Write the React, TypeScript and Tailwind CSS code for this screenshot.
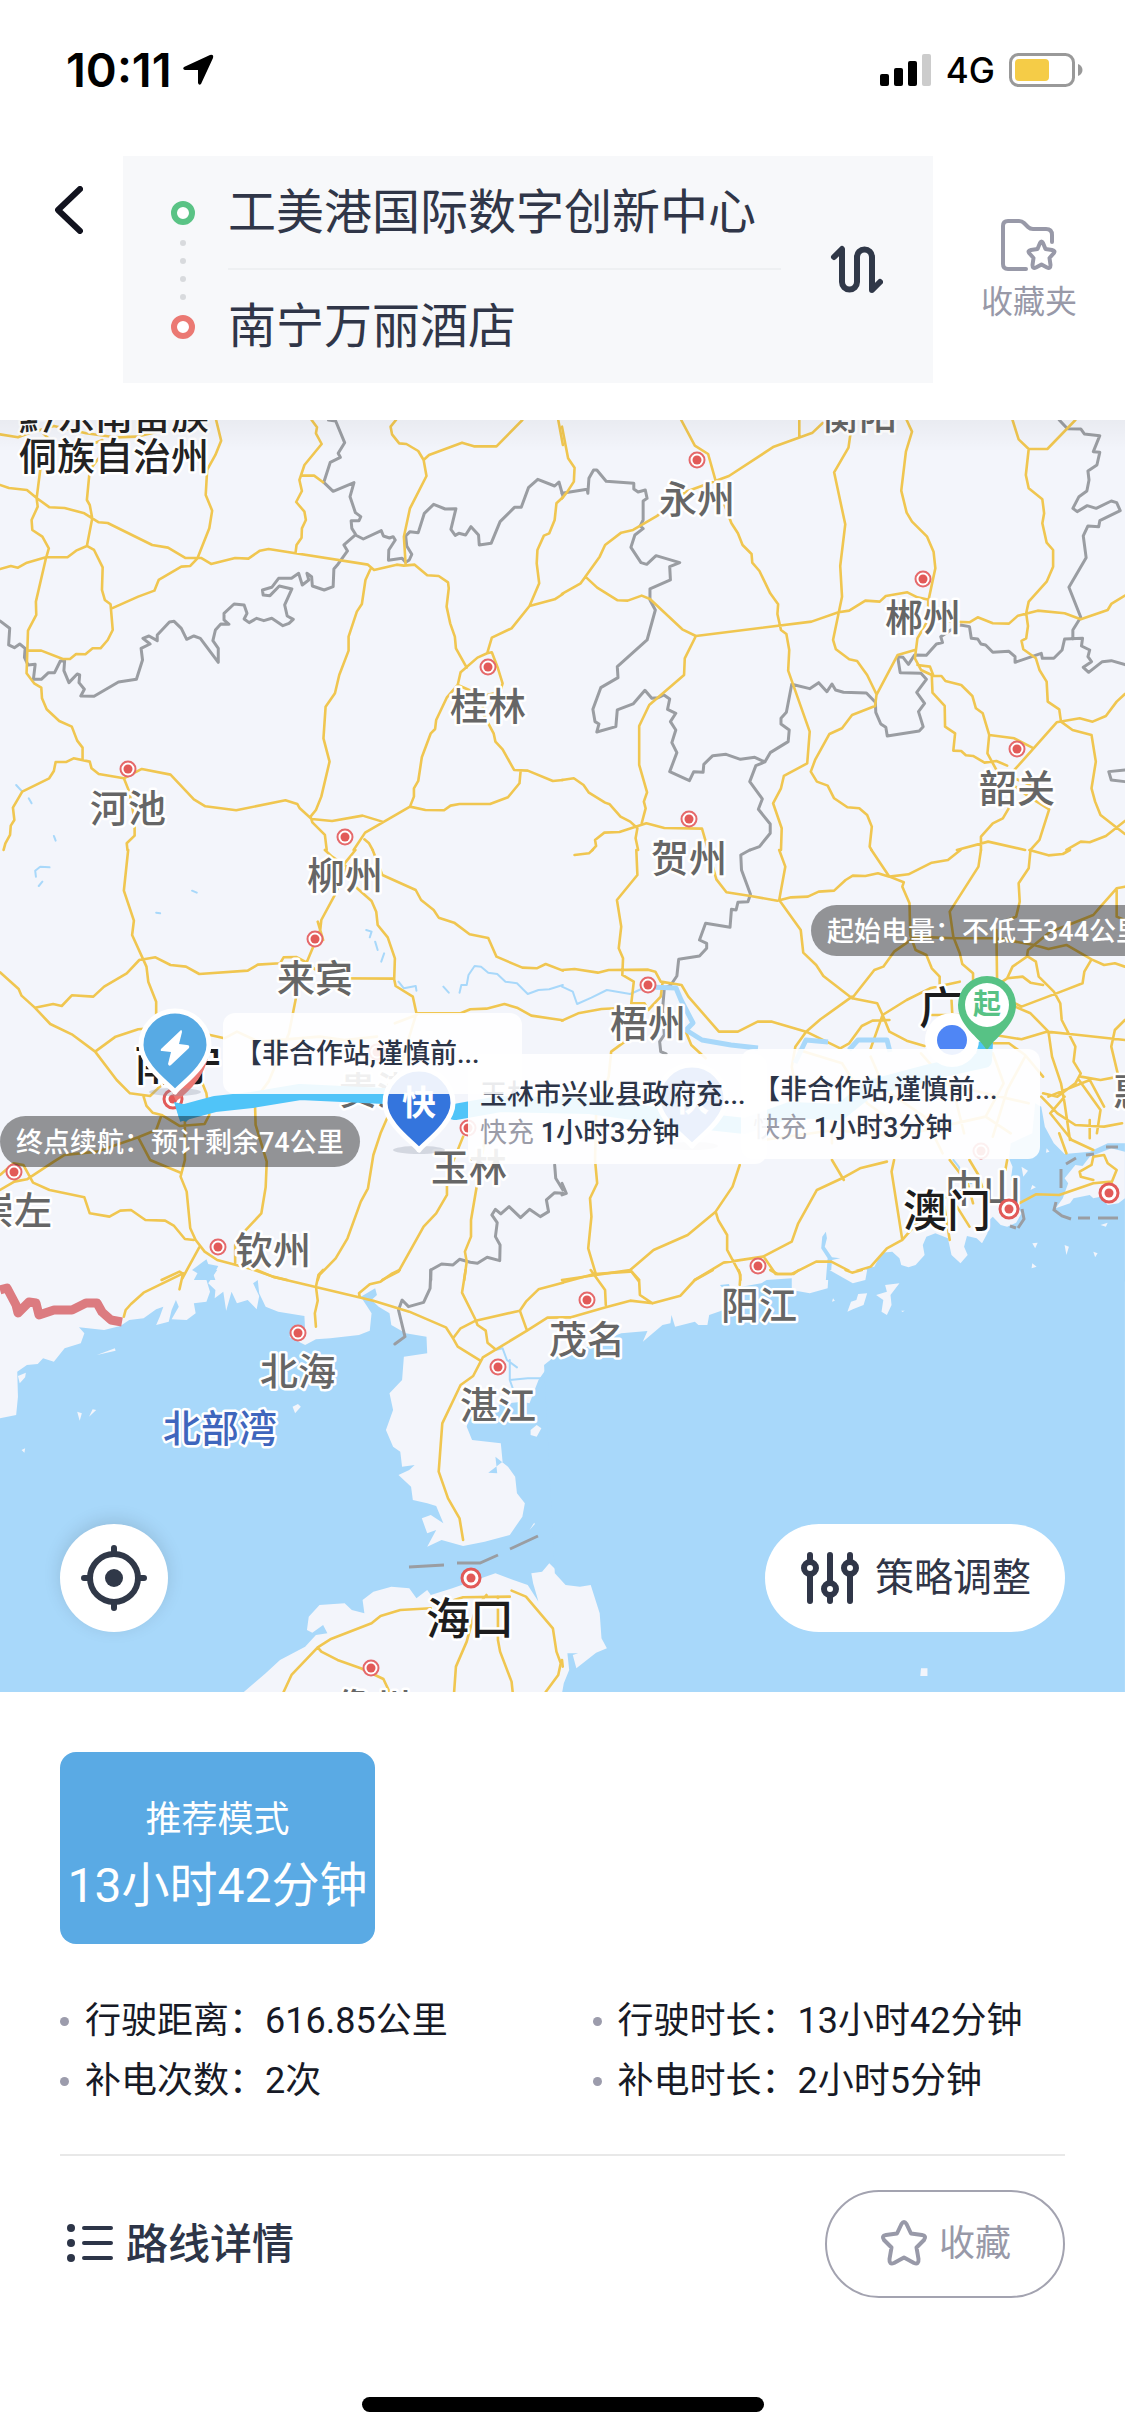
import { useState } from "react";
import { clsx } from "clsx";

type Tile = { x: number; y: number; land?: string; sea?: string; rivers?: string; borders?: string; roads: string };

// Map geometry, one entry per tile. Paths are in tile units (1568 x 1290).
const TILES: Tile[] = [
  {
    x: 0,
    y: 0,
    rivers: "M45 1095L62 1115M80 1135L88 1150M150 1248L155 1262",
    borders:
      "M0 603L27 625 24 675 40 683 55 672 70 685 68 712 78 735 98 733 93 778 115 778 135 758 152 758 168 723 180 722 178 752 192 788 215 762 222 765 220 788 235 808 225 828 262 829 330 786 380 778 397 720 393 685 418 672 398 655 415 648 438 662 438 645 472 606 485 604 505 625 520 658 540 648 558 655 608 727 608 685 593 662 600 630 615 612 638 613 624 600 624 580 652 552 680 555 688 580 680 597 694 608 715 595 735 602 757 595 788 617 805 610 817 598 800 588 793 555 813 507 778 498 752 527 733 525 731 510 757 502 776 475 812 475 832 460 842 495 860 480 855 460 868 470 870 498 903 510 928 500 930 447 942 432 968 393 958 375 990 345 1012 357 1062 332 1068 348 1085 354 1095 350 1101 360 1083 390 1082 421 1120 415 1130 427 1140 420 1147 403 1133 378 1130 348 1142 335 1165 338 1182 280 1208 253 1240 267 1270 266 1256 328 1268 346 1278 340 1297 345 1312 320 1333 345 1335 375 1368 370 1393 305 1433 262 1452 262 1472 203 1498 178 1545 198 1557 186 1568 228M915 0L935 3 960 68 942 100 948 112 920 127 902 187 928 214 986 188 975 230 990 278 1005 290 1000 302 978 302 980 325 990 342",
    roads:
      "M0 43L50 52 80 40 150 18 240 40 320 52 380 50 460 30M120 40L140 60 112 150 102 235 105 260 88 300 90 330 118 350 136 385 128 415 100 545 101 585 78 632 74 760 95 790 115 803 117 835 130 868 165 903 200 920 215 962 230 983 230 1020M0 195L25 204 75 210 102 234 138 262 180 264 235 280 275 307 300 309 424 375 468 383 516 414 560 414 588 432 655 414 692 416 724 392 748 387 1025 434 1042 450 1105 434 1125 437 1155 434 1190 466 1222 468 1248 487 1250 505 1244 560 1254 610 1267 650 1270 685 1300 743M240 80L285 60 278 110 250 150 242 240 250 255 257 295 242 378 212 392 188 412 130 411 75 428 50 443 30 438 0 447M602 0L616 62 600 105 577 150 573 225 591 272 583 325 550 415 530 438 505 440 442 480 430 512 385 530 310 566M242 378L262 390 286 442 284 510 292 540 308 553 314 630 300 660 280 685 258 685 238 703 212 702 195 717 175 717 115 692 78 692M868 0L883 22 880 40 896 72 848 135 834 180 841 213 825 246 848 275 852 300 841 325 840 353 826 375 823 400M838 167L875 167 900 187M1103 0L1088 20 1092 43 1112 70 1132 72 1165 93 1180 120 1188 168 1142 265 1125 350 1130 435M1180 120L1195 105 1287 68 1320 79 1383 79 1455 0M1555 0L1568 75M1568 232L1550 250 1545 300 1530 340 1515 347 1497 390 1495 430 1502 490 1475 558 1425 625 1370 653 1357 700 1330 713 1283 757 1275 795 1245 832 1215 900 1212 927 1200 940 1175 1012 1165 1083 1153 1105 1153 1130 1142 1160 1017 1238 985 1290M1568 522L1545 538 1475 558M1357 700L1370 697 1387 745 1400 790 1393 815 1345 828 1275 795M1345 828L1345 880 1375 940 1380 965 1400 988 1432 1050 1470 1052 1540 1083 1568 1080M1450 1055L1447 1090 1415 1132 1365 1152 1280 1152 1255 1157 1237 1171 1185 1170 1142 1160M1032 447L1018 480 1008 552 994 575 971 650 971 692 945 765 933 820 907 860 901 955 918 1025 895 1130 880 1170 865 1190 870 1207 905 1245 910 1290M1065 1205L1010 1187 925 1203 868 1197 835 1165 828 1152 795 1141 658 1171 572 1159 540 1138 475 1064 395 1047 345 1075 275 1062 255 1045 250 1025 205 1015 185 1026 155 1026 150 1053 137 1075 62 1115 36 1163 40 1200 30 1217 28 1245 15 1270 10 1290M345 1075L360 1115 375 1200 375 1247 353 1270 355 1290M1015 1258L1028 1270 1038 1290",
  },
  {
    x: 562,
    y: 0,
    borders:
      "M0 220L70 208 72 220 75 175 88 150 97 150 123 184 200 190 200 207 212 216 232 210 237 235 226 243 226 300 218 318 226 326 203 345 192 382 220 428 236 433 262 407 328 428 300 440 302 480 245 507 245 540 260 570 237 660 154 740 156 773 108 803 86 868 92 905 103 912 97 936 150 920 154 870 198 852 231 811 250 835 268 833 284 825 300 837 294 868 317 880 302 905 317 930 306 968 320 998 300 1055 355 1082 367 1055 393 1057 395 1033 420 1007 457 1003 497 1018 537 1012 565 1026 580 998 630 965 633 930 610 912 610 895 625 877 640 793 690 806 715 788 738 815 752 792 762 810 784 817 848 819 873 847 874 877 888 912 902 922 906 948 995 933 1006 920 993 875 1010 850 988 817 1015 778 1000 760 942 758 935 710 950 712 965 733 982 705 1015 706 1043 672 1060 668 1055 650 1080 632 1110 615 1135 620 1140 655 1158 657 1167 672 1180 675 1200 697 1245 694 1262 710 1262 727 1335 700 1338 715 1370 715 1393 690 1400 657 1450 655 1447 678 1470 690 1465 710 1475 725 1452 742 1467 757 1505 725 1530 722 1568 734M1385 0L1408 26 1445 27 1455 42 1498 47 1480 95 1498 97 1490 135 1465 153 1468 180 1462 213 1440 230 1423 265 1435 275 1463 257 1488 265 1530 243 1545 248 1555 272 1498 302 1495 320 1465 318 1452 348 1460 413 1412 502 1445 592 1423 630 1423 657M565 1026L540 1037 523 1085 558 1137 547 1168 580 1212 580 1240 550 1280 525 1290M1568 1050L1523 1055 1530 1080 1568 1085",
    roads:
      "M0 20L17 115 35 143 33 185 15 215 0 235M0 522L52 490 65 470 105 410 120 375 165 338 198 330 265 288 290 262 345 215 465 168 590 80 698 38 735 0M332 0L370 77 407 102 430 190 472 310 490 340 503 375 528 402 530 428 550 453 580 520 602 553 600 582 610 630 625 642 633 690 630 752 690 935 683 1030 618 1068 610 1105 588 1150 612 1225 610 1290M661 0L661 50M803 0L803 45 798 83 758 157 789 313 775 438 780 530 755 660 763 688 800 718 822 723 850 765 876 823M960 0L975 35 958 95 945 212 960 278 975 305 1017 350 1035 395 1040 445 1020 545 1020 600 990 655 983 715 1000 750 1030 765 1032 818 1066 858 1067 920 1095 940 1090 992 1112 993 1125 1006 1145 1008 1177 1028 1210 1023 1240 1037M65 470L98 503 155 541 183 542 222 527 245 537 335 628 373 648 695 605 770 577 800 572 845 542 885 545 902 528 962 517 990 532 1025 540M373 648L342 715 340 765 243 855 215 918 215 1035 237 1117 228 1145 233 1165 222 1210M983 690L935 705 876 825 872 858 808 885 780 925 745 942 705 1020 693 1055 710 1085 740 1097 758 1135 795 1162 828 1165 850 1185 863 1220 857 1280 862 1290M990 735L1025 740 1035 768 1057 768 1068 783 1112 795 1143 828 1153 865 1172 880 1190 945 1185 1000 1210 1050M1190 945L1260 955 1310 983M1255 0L1272 58 1300 87 1352 87 1430 0M1300 87L1292 165 1300 205 1338 238 1343 280 1338 310 1350 368 1368 390 1368 440 1350 485 1300 545 1293 580 1298 618 1293 655 1280 663 1285 688 1320 715 1330 750 1350 785 1353 845 1385 868 1390 905 1422 930 1475 945 1487 1025 1475 1105 1485 1145 1500 1185 1568 1242M1080 605L1135 607 1158 592 1200 610 1245 611 1270 587 1325 572 1400 580 1445 598 1520 570 1530 552 1568 527M1568 822L1545 845 1515 888 1478 905 1442 895 1378 907 1310 990 1260 1050 1250 1090 1300 1130 1357 1168 1330 1260 1305 1290M1260 1075L1305 1095M1250 1155L1228 1195 1200 1210 1167 1250 1167 1290M1100 1290L1187 1265 1290 1290M1405 1290L1445 1265 1470 1267 1515 1248 1568 1203M0 1080L33 1075 60 1095 75 1118 120 1148 133 1153 163 1190 190 1205 210 1225 205 1255 212 1290M85 1290L95 1278 92 1260 118 1238 160 1236 235 1210 285 1224 390 1226 407 1290",
  },
  {
    x: 0,
    y: 430,
    sea: "M540 1290L550 1270 535 1260 560 1240 575 1228 580 1242 608 1248 595 1275 600 1290Z",
    rivers:
      "M100 80L98 62 112 50 138 52M118 95L108 108M535 122L548 128M435 188L446 190M1020 240L1035 245 1030 262M1045 275L1052 300M1070 310L1062 335M1110 395L1125 415 1158 408 1160 422M1235 410L1250 428M1280 428L1285 405 1300 405 1305 375 1322 348 1340 350 1360 368 1385 372 1408 395 1440 400 1470 432 1500 420 1530 418 1568 405",
    borders:
      "M1545 945L1548 985 1568 1020M1568 1030L1545 1028 1522 1050 1528 1085 1505 1100 1475 1078 1450 1103 1418 1070 1395 1092 1380 1078 1370 1095 1385 1118 1380 1160 1393 1185 1392 1232 1357 1222 1330 1240 1310 1237 1280 1228 1262 1245 1230 1242 1200 1260 1200 1290",
    roads:
      "M357 0L345 122 373 212 368 255 408 350 413 395 435 455 435 500M388 330L433 322 475 345 518 350 555 372 690 362 718 344 780 340 790 322 825 321 855 338 880 360 910 368M388 330L353 370 290 410 260 440 200 436 172 468 148 462 97 473M0 367L52 417 60 437 97 473 140 522 200 553 265 605 325 690 362 730 418 738 440 715 470 690M265 605L322 560 385 538 480 530 585 555 625 565 660 545 720 575 890 560 960 570 1050 560M905 0L925 20 965 50 935 130 895 210 892 240 855 335 825 440 805 550 748 695 710 750 712 825 743 935 740 1012 728 1090 685 1140 655 1185 655 1240M885 215L900 270M990 0L960 40M1038 0L1065 75 1158 120 1173 150 1208 180 1222 203 1265 218 1308 253 1360 264 1383 320 1455 353 1495 355 1520 342 1568 362M965 50L990 110 1035 153 1048 185 1052 225 1080 262 1100 325 1098 388 1102 408 1150 440 1160 490 1140 560 1120 640M910 385L1098 386M1160 490L1283 490 1310 478 1355 476 1405 462 1440 473 1480 497 1568 511M1100 520L1160 495M400 740L408 768 425 788 450 795 500 828 570 822 583 795 575 730 560 690M450 795L435 840 385 862 270 905 180 915 150 935 75 988 40 995 0 1020M0 975L38 940 65 945 92 998 138 1020 235 1042 250 1090 305 1100 335 1082 365 1080 405 1110 460 1112 485 1128 515 1167 540 1170M385 862L418 930 500 967M515 800L515 930 503 980 520 1025 530 1135 545 1170 570 1205 605 1230 700 1257 760 1280 800 1290M555 1192L508 1285M450 1290L500 1265 510 1272M1080 800L1060 850 1040 915 1025 1015 1005 1055 968 1165 935 1225 890 1275 885 1290M1290 860L1245 980 1245 1035 1215 1090 1180 1130 1110 1265 1065 1290M1350 870L1312 1110 1312 1160 1295 1205 1300 1235 1293 1290",
  },
  {
    x: 562,
    y: 430,
    sea: "M850 1295L848 1255 870 1250 880 1230 890 1208 920 1205 940 1225 945 1245 965 1252 985 1245 1010 1215 1005 1185 1015 1160 1040 1150 1075 1165 1085 1215 1110 1240 1130 1215 1120 1190 1128 1158 1155 1165 1170 1180 1185 1150 1190 1110 1200 1100 1222 1125 1240 1130 1265 1118 1280 1090 1262 1060 1270 1010 1250 990 1255 950 1245 925 1250 880 1310 850 1318 760 1335 770 1345 830 1370 880 1400 912 1470 905 1520 880 1568 880 1568 1295ZM735 1290L740 1225 722 1195 725 1160 735 1145 738 1165 732 1190 752 1222 775 1225 752 1230 748 1290Z",
    land: "M1375 1075L1395 1045 1410 1000 1400 985 1430 945 1450 948 1470 920 1530 895 1568 905 1568 1045 1550 1060 1520 1065 1500 1040 1480 1045 1470 1035 1425 1045 1415 1060ZM1280 950L1298 962 1285 980ZM1310 1005L1320 1012 1305 1020ZM1350 895L1358 905 1348 908ZM1310 1180L1325 1178 1318 1195ZM1400 1185L1412 1190 1405 1215ZM1480 1205L1492 1210 1485 1222ZM1310 1240L1322 1250 1308 1255ZM1240 1270L1252 1275 1245 1285ZM1500 1125L1520 1118 1515 1130Z",
    rivers:
      "M0 410L30 425 42 462 82 443 125 420 190 432 240 408M1090 930L1105 950 1118 985 1140 1000",
    borders:
      "M523 0L498 15 500 60 525 133 518 155 490 157 485 180 472 178 468 232 400 220 383 270 403 280 403 295 383 318 325 328 320 378 303 405 285 415 280 480 285 555 272 575 275 605 290 612M0 1000L12 1030 0 1035",
    roads:
      "M35 15L75 10 85 0M207 0L210 75 153 150 165 230 158 295 170 325 168 375 200 395 193 460 230 460 240 480 275 440 280 398M0 360L35 357 100 368 130 360 240 359 260 365 275 395 333 405 352 440 437 545 490 545 545 515 585 515 680 545 720 508 808 440M0 512L45 490 110 477 150 475M175 575L137 605 130 680 95 790 92 930 98 1000 78 1045 82 1100 73 1195 95 1275M345 545L360 585 400 625M407 0L430 88 458 127 525 138 600 152 638 142 685 140 715 125 758 122 790 90 810 77 845 78 880 70 912 80 965 73 1030 38 1075 30 1110 0M605 0L622 50 605 150 665 240 672 308 708 345 728 378 808 445 878 460 893 495 912 545 960 572 1010 588M862 0L912 80 952 97 948 110 968 160 970 255 985 300 1015 315 1030 355 1052 380 1052 410M1167 0L1160 50 1080 185 1090 260 1108 310 1115 342 1145 370 1145 430M1305 0L1300 55 1272 100 1275 155 1265 200 1240 210M1302 0L1355 16 1395 12 1415 0M1568 110L1545 115 1500 170 1480 195 1410 225 1360 245 1315 285 1298 300 1295 320 1255 350 1240 385 1185 425M1545 115L1545 200 1568 210M808 445L870 360 895 350 925 305 985 260 1090 265M1210 240L1212 400M1090 265L1210 265 1315 285 1355 297 1405 285 1475 328 1510 345 1540 340 1568 350M1298 320L1320 335 1328 380 1370 425 1388 460 1392 510 1430 590 1425 635 1445 670 1430 700 1380 740 1340 730M1240 385L1283 380 1305 398 1340 405M1475 328L1455 365 1450 400 1390 425 1280 470 1262 460M1262 470L1305 490 1355 545 1365 620 1390 700 1400 760 1415 870M1108 395L1025 415 960 450 893 495 860 595M912 510L865 512 835 528 800 580 775 595 680 545 650 590 640 650M1030 495L1110 495M1085 450L1090 550M1205 555L1280 568 1350 545 1440 555 1568 570M1190 540L1190 580 1245 580 1290 615 1340 680M1568 510L1540 540 1530 590 1550 680 1500 690 1445 680M1335 740L1380 790 1430 825 1510 830 1560 820M1355 740L1470 690 1510 770M1440 690L1500 780 1490 850M1400 740L1360 790 1420 870 1480 900M1470 810L1470 865M1385 850L1405 910M495 945L475 1010 428 1085 435 1110 460 1155 460 1200 495 1270 497 1290M428 1085L350 1155 255 1200 190 1260 95 1275 0 1290M190 1260L215 1290M370 1290L450 1238 560 1220 640 1175 658 1120 710 1020 780 985 830 955 905 935M925 930L918 965 948 1170 905 1195 860 1250 808 1267 750 1235 708 1235 640 1272 595 1272 565 1225M752 930L785 990M948 1170L1000 1105 1070 1040M1080 930L1130 1000 1145 1060M1135 930L1160 975 1170 1010M1240 930L1235 960M1065 1070L1080 1170M1100 1070L1135 1130M1244 1077L1320 1033 1385 1035 1480 1000 1530 995M1480 990L1445 980 1442 965 1475 945 1480 920 1510 915 1520 940 1545 960 1530 1000M640 650L660 760 750 800 752 880M660 600L780 640 850 760 940 830M860 620L900 720 1010 800 1060 910M1000 610L1090 720 1120 850M1200 610L1230 700 1180 800 1250 850M1290 620L1240 720 1200 860M1060 700L1300 760M560 870L760 840 930 860 1180 800",
  },
  {
    x: 0,
    y: 850,
    sea: "M0 445L45 435 50 380 48 305 75 285 105 282 120 265 150 275 180 235 225 220 235 190 220 172 290 180 335 168 360 150 400 145 435 118 455 110 445 140 435 165 470 155 478 120 490 90 498 110 478 148 520 150 545 130 540 100 575 95 585 65 575 30 545 0 605 0 580 40 600 60 598 85 622 65 630 122 645 65 660 100 690 90 715 118 722 78 705 40 718 30 722 70 740 110 775 125 848 138 850 185 805 200 850 225 880 208 920 205 1000 195 1030 182 1035 130 1005 80 1045 55 1050 75 1035 90 1055 110 1085 130 1090 165 1130 190 1188 200 1190 250 1125 260 1120 330 1085 370 1095 420 1075 480 1095 530 1115 545 1120 590 1155 585 1140 600 1110 615 1145 650 1150 690 1190 700 1215 708 1235 760 1200 735 1175 745 1190 790 1215 780 1190 830 1230 810 1290 828 1350 815 1420 795 1455 740 1462 700 1440 670 1435 620 1415 590 1380 560 1385 610 1360 608 1400 575 1395 520 1315 510 1300 470 1310 420 1415 400 1455 395 1475 400 1500 330 1545 260 1568 250 1568 920 1530 880 1510 905 1480 910 1485 940 1500 995 1470 945 1430 930 1380 910 1340 925 1260 955 1200 975 1190 960 1160 985 1140 955 1090 950 1040 965 1010 990 1015 1030 980 1020 960 1000 890 1005 860 1040 855 1080 870 1088 900 1065 912 1090 880 1095 850 1130 780 1170 740 1210 675 1270 0 1270Z",
    land: "M50 318L72 308 70 322 55 340ZM270 255L320 235 322 242ZM215 425L228 430 222 452ZM248 440L258 418 268 420ZM815 410L830 402 838 410 822 430ZM60 540L70 535 68 548ZM1478 480L1495 465 1508 475 1495 500 1478 495ZM1475 780L1488 758 1490 762Z",
    rivers: "M1380 240L1400 235 1412 270 1440 292M1420 270L1420 330 1470 325 1510 325M1420 330L1435 375",
    borders: "M1200 0L1198 55 1180 97 1138 110 1120 90 1110 120 1128 200 1100 222",
    roads:
      "M500 58L510 10 400 68 365 102 350 120 345 140M715 0L765 22 985 78 1040 92 1140 125 1242 172 1262 205 1275 230 1338 272M900 0L887 15 880 50 885 92 877 130 880 170M1113 0L1090 12 1060 35 1030 43 1000 70 1002 80M1297 0L1287 68 1325 150 1330 165 1353 182 1358 218 1380 238M1568 38L1500 58 1465 95 1448 122 1325 152 1283 175 1262 205M1448 122L1468 182M1568 142L1525 143 1468 182 1345 262 1318 318 1283 345 1232 460 1222 605 1248 685 1280 745 1290 810M1265 990L1290 982 1420 980M1200 1015L1115 1020 1060 1038 1035 1060 920 1108 885 1132 812 1215 790 1266M885 1132L895 1145 940 1170 1005 1195 1068 1227 1085 1266M1355 975L1325 1015 1300 1115 1270 1190 1265 1266M1387 980L1387 1110 1393 1145 1425 1235 1428 1266M1425 962L1465 980 1540 1075 1550 1145 1562 1180 1555 1215 1520 1266",
  },
  {
    x: 562,
    y: 850,
    sea: "M-50 285L-15 255 30 235 60 235 165 190 238 183 225 215 280 165 302 160 305 135 315 170 370 155 380 165 405 165 410 135 450 120 460 70 440 45 465 42 470 60 500 50 555 40 570 30 640 25 640 60 690 70 740 55 743 0 1568 0 1568 1270 0 1270 5 1240 20 1200 15 1150 45 1150 30 1155 40 1195 95 1148 125 1135 110 1105 105 1030 80 945 50 950 10 945 -20 910Z",
    land: "M745 0L810 40 845 30 850 0ZM795 125L805 95 820 90 825 72 850 70 840 105 810 118ZM875 75L905 65 900 45 940 40 915 75 918 105 905 135 890 125 895 90ZM755 85L760 92 752 95ZM945 122L955 122 948 126ZM1000 1195L1018 1195 1018 1218 998 1218Z",
    roads: "M0 38L90 12 190 5M80 0L120 60 122 105M190 0L215 35 217 75 252 100M0 142L25 142 122 112 190 92 252 100 330 77 370 30 420 0M492 0L497 15 495 45M580 0L600 12 645 12 660 0M790 0L808 8 835 0M0 1170L2 1190",
  },
];

type City = { name: string; x: number; y: number; dot?: [number, number]; tone?: "city" | "major" | "area" | "sea" };

const CITIES: City[] = [
  { name: "黔东南苗族", x: 114, y: -4, tone: "area" },
  { name: "侗族自治州", x: 114, y: 37, tone: "area" },
  { name: "衡阳", x: 859, y: -4 },
  { name: "永州", x: 697, y: 80, dot: [697, 40] },
  { name: "郴州", x: 923, y: 198, dot: [923, 159] },
  { name: "桂林", x: 488, y: 287, dot: [488, 247] },
  { name: "河池", x: 128, y: 389, dot: [128, 349] },
  { name: "韶关", x: 1017, y: 369, dot: [1017, 329] },
  { name: "柳州", x: 345, y: 456, dot: [345, 417] },
  { name: "贺州", x: 689, y: 439, dot: [689, 399] },
  { name: "来宾", x: 315, y: 559, dot: [315, 519] },
  { name: "梧州", x: 648, y: 604, dot: [648, 565] },
  { name: "贵港", x: 377, y: 671, dot: [377, 632] },
  { name: "玉林", x: 469, y: 748, dot: [468, 708] },
  { name: "崇左", x: 14, y: 791, dot: [14, 752] },
  { name: "钦州", x: 273, y: 831, dot: [218, 827] },
  { name: "惠州", x: 1151, y: 672 },
  { name: "中山", x: 983, y: 769, dot: [981, 731] },
  { name: "阳江", x: 759, y: 886, dot: [758, 846] },
  { name: "茂名", x: 587, y: 920, dot: [587, 880] },
  { name: "北海", x: 298, y: 952, dot: [298, 913] },
  { name: "湛江", x: 498, y: 986, dot: [498, 947] },
  { name: "儋州", x: 373, y: 1288, dot: [371, 1248] },
  { name: "北部湾", x: 220, y: 1009, tone: "sea" },
  { name: "南宁", x: 178, y: 646, tone: "major" },
  { name: "广州", x: 963, y: 589, tone: "major" },
  { name: "澳门", x: 947, y: 792, tone: "major" },
  { name: "海口", x: 470, y: 1200, tone: "major" },
];

const CAPITALS = [
  [1009, 789],
  [1109, 773],
  [471, 1158],
  [173, 679],
];

const STATS = [
  { label: "行驶距离", value: "616.85公里" },
  { label: "行驶时长", value: "13小时42分钟" },
  { label: "补电次数", value: "2次" },
  { label: "补电时长", value: "2小时5分钟" },
];

function MapCanvas() {
  return (
    <svg
      className="absolute inset-0 h-full w-full"
      viewBox="0 0 1125 1272"
      preserveAspectRatio="xMidYMid slice"
      role="img"
      aria-label="路线地图"
    >
      <rect width="1125" height="1272" fill="#f3f5fb" />
      {TILES.map((t) => (
        <g
          key={`${t.x}-${t.y}`}
          transform={`translate(${t.x} ${t.y}) scale(0.359 0.3333)`}
          fill="none"
          strokeLinejoin="round"
          strokeLinecap="round"
        >
          {t.sea && <path d={t.sea} fill="#a8d8fa" />}
          {t.land && <path d={t.land} fill="#f3f5fb" />}
          {t.rivers && <path d={t.rivers} stroke="#a8d8fa" strokeWidth="2" vectorEffect="non-scaling-stroke" />}
          {t.borders && <path d={t.borders} stroke="#9a9da2" strokeWidth="3" vectorEffect="non-scaling-stroke" />}
          <path d={t.roads} stroke="#f0c650" strokeWidth="2.6" vectorEffect="non-scaling-stroke" />
        </g>
      ))}

      {/* wide stretches of the Xijiang */}
      <path
        d="M648 567L676 568 681 580 693 603 686 610 702 620 731 625 758 628M795 643L806 620 828 622M849 630L858 620 887 620 890 632"
        fill="none"
        stroke="#a8d8fa"
        strokeWidth="5"
        strokeLinejoin="round"
      />

      {/* national border and sea boundaries */}
      <path
        d="M0 870L7 868 16 885 18 893 29 882 36 883 39 895 54 890 72 890 86 883 97 883 102 892 111 900 122 902"
        fill="none"
        stroke="#dc7b80"
        strokeWidth="9"
        strokeLinejoin="round"
      />
      <path
        d="M409 1147L444 1145M457 1143L480 1143 498 1135M510 1129L538 1116M1061 749V768M1066 744L1076 738M1086 735L1094 734M1106 727H1118M1056 782L1054 790 1062 796 1071 799M1078 798H1090M1098 798H1118M1022 789L1024 799 1018 808M1010 806L1016 808"
        fill="none"
        stroke="#9a9da2"
        strokeWidth="3"
      />

      {CITIES.map(
        (c) =>
          c.dot && (
            <g key={c.name}>
              <circle cx={c.dot[0]} cy={c.dot[1]} r="7.500" fill="#fff" stroke="#e5696b" strokeWidth="2" />
              <circle cx={c.dot[0]} cy={c.dot[1]} r="4.500" fill="#e25a58" />
            </g>
          )
      )}
      {CITIES.map((c) => (
        <text
          key={c.name}
          x={c.x}
          y={c.y}
          textAnchor="middle"
          dominantBaseline="central"
          stroke="#fff"
          strokeWidth="5"
          strokeLinejoin="round"
          paintOrder="stroke"
          className={clsx(
            "font-medium",
            !c.tone && "fill-[#666] text-[38px]",
            c.tone === "area" && "fill-[#222] text-[38px]",
            c.tone === "sea" && "fill-[#3f66bd] text-[38px]",
            c.tone === "major" && "fill-[#1d1d1d] text-[44px]"
          )}
        >
          {c.name}
        </text>
      ))}
      {CAPITALS.map(([x, y]) => (
        <g key={`${x}-${y}`}>
          <circle cx={x} cy={y} r="9" fill="#fff" stroke="#e25a58" strokeWidth="3" />
          <circle cx={x} cy={y} r="4.500" fill="#e25a58" />
        </g>
      ))}

      {/* driving route */}
      <path
        d="M178 694L200 688 215 684 252 680 300 672 384 676 420 682 455 692 500 684 590 686 690 700 745 706 790 690 840 692 870 668 930 652 984 640 985 622"
        fill="none"
        stroke="#50c4f8"
        strokeWidth="16"
        strokeLinejoin="round"
      />
      <path d="M174 682L200 688 192 696 186 702 179 698Z" fill="#50c4f8" />

      {/* current position */}
      <circle cx="952" cy="620" r="27" fill="#fff" />
      <circle cx="952" cy="620" r="15" fill="#4f86f5" />

      {/* destination marker, mostly hidden by the charging pin */}
      <path d="M176 681C190 672 208 652 209 630L188 648 172 672Z" fill="#ec7873" />
    </svg>
  );
}

function Pin({ className, kind }: { className: string; kind: "bolt" | "fast" | "start" }) {
  const fill = { bolt: "#57aae4", fast: "#3475dd", start: "#57c285" }[kind];
  return (
    <div className={clsx("absolute flex h-[90px] w-[76px] justify-center", className)}>
      <svg className="absolute inset-0 h-full w-full" viewBox="0 0 76 90" aria-hidden>
        {kind === "start" ? (
          <>
            <path d="M38 76C33 64 9 52 9 30A29 29 0 0 1 67 30C67 52 43 64 38 76Z" fill={fill} />
            <circle cx="38" cy="30" r="22" fill="#fff" />
          </>
        ) : (
          <>
            <ellipse cx="38" cy="84" rx="26" ry="4" fill="#8a93a3" opacity="0.3" />
            <path
              d="M38 84C34 78 4 58 4 37A34 34 0 0 1 72 37C72 58 42 78 38 84Z"
              fill={fill}
              stroke="#fff"
              strokeWidth="5"
              strokeLinejoin="round"
            />
          </>
        )}
        {kind === "bolt" && (
          <path
            d="M44 22L24 41Q23 43 25 43L34 44 31 56Q32 59 34 57L52 40Q53 37 50 37L42 36 45 24Q45 22 44 22Z"
            fill="#fff"
          />
        )}
      </svg>
      {kind === "fast" && <span className="relative mt-[17px] text-[34px] leading-10 font-bold text-white">快</span>}
      {kind === "start" && <span className="relative mt-[10px] text-[28px] leading-10 font-bold text-[#57c285]">起</span>}
    </div>
  );
}

function StationCard({ className, name, time }: { className: string; name: string; time?: string }) {
  return (
    <div
      className={clsx(
        "absolute w-[299px] rounded-xl bg-white/90 px-3 pt-[22px] text-[27px] leading-[38px] whitespace-nowrap text-[#2d3548]",
        time ? "h-[110px]" : "h-[81px]",
        className
      )}
    >
      <p className="font-medium">{name}</p>
      {time && (
        <p>
          <span className="text-[#9b9ca8]">快充</span> <b className="font-medium">{time}</b>
        </p>
      )}
    </div>
  );
}

function RangePill({ className, children }: { className: string; children: string }) {
  return (
    <p
      className={clsx(
        "absolute rounded-full bg-black/40 px-4 pt-[3px] text-[27px] leading-12 font-medium whitespace-nowrap text-white",
        className
      )}
    >
      {children}
    </p>
  );
}

function StatusBar() {
  return (
    <div className="flex h-[138px] items-start justify-between pt-[42px] pr-[42px] pl-[66px] font-['Inter',sans-serif] text-black">
      <div className="flex items-center gap-2.5">
        <span className="text-[47px] leading-[56px] font-semibold">10:11</span>
        <svg className="h-8 w-8" viewBox="0 0 32 32" aria-hidden>
          <path d="M2 13L28 1Q32 0 31 4L19 30Q17 32 16 29V16H3Q0 15 2 13Z" fill="currentColor" />
        </svg>
      </div>
      <div className="flex h-[56px] items-center gap-[14px]">
        <svg className="h-8 w-[52px]" viewBox="0 0 52 32" aria-hidden>
          <rect x="0" y="20" width="9" height="12" rx="2" />
          <rect x="14" y="14" width="9" height="18" rx="2" />
          <rect x="28" y="7" width="9" height="25" rx="2" />
          <rect x="42" y="0" width="9" height="32" rx="2" fill="#ccc" />
        </svg>
        <span className="text-[35px] leading-[56px] font-medium">4G</span>
        <svg className="h-[34px] w-[74px]" viewBox="0 0 74 34" aria-hidden>
          <rect x="1.5" y="1.5" width="63" height="31" rx="8" fill="none" stroke="#999" strokeWidth="3" />
          <rect x="6" y="6" width="34" height="22" rx="4" fill="#f5cc47" />
          <path d="M69 11C75 13 75 21 69 23Z" fill="#999" />
        </svg>
      </div>
    </div>
  );
}

function StarIcon({ className }: { className: string }) {
  return (
    <svg className={className} viewBox="0 0 50 50" fill="none" aria-hidden>
      <path
        d="M22.5 5Q25 1 27.500 5L32 14.500 43 16Q48 17 45 21L37.500 28.500 39.500 40Q40 46 35 44L25 38.500 15 44Q10 46 10.500 40L12.500 28.500 5 21Q2 17 7 16L18 14.500Z"
        stroke="currentColor"
        strokeWidth="4"
        strokeLinejoin="round"
      />
    </svg>
  );
}

function RouteHeader() {
  return (
    <header className="flex items-start pt-[18px] pb-[37px]">
      <button type="button" aria-label="返回" className="flex h-[108px] w-[123px] shrink-0 items-center pl-[55px]">
        <svg className="h-12 w-7" viewBox="0 0 28 48" fill="none" aria-hidden>
          <path d="M25 3L3 24 25 45" stroke="#12131f" strokeWidth="6" strokeLinecap="round" strokeLinejoin="round" />
        </svg>
      </button>
      <div className="flex h-[227px] min-w-0 flex-1 items-center bg-[#f7f8fa] pl-12">
        <svg className="h-[140px] w-6 shrink-0" viewBox="0 0 24 140" fill="none" aria-hidden>
          <circle cx="12" cy="13" r="9" fill="#fff" stroke="#5ac385" strokeWidth="6" />
          <g fill="#d8dadd">
            <circle cx="12" cy="43" r="3" />
            <circle cx="12" cy="61" r="3" />
            <circle cx="12" cy="79" r="3" />
            <circle cx="12" cy="97" r="3" />
          </g>
          <circle cx="12" cy="127" r="9" fill="#fff" stroke="#eb7973" strokeWidth="6" />
        </svg>
        <div className="ml-[33px] min-w-0 flex-1 text-5xl text-[#303648]">
          <button type="button" className="block h-[114px] w-full truncate border-b-2 border-[#eef0f2] pt-0.5 text-left">
            工美港国际数字创新中心
          </button>
          <button type="button" className="block h-[113px] w-full truncate text-left">
            南宁万丽酒店
          </button>
        </div>
        <button type="button" aria-label="交换起终点" className="mr-[50px] ml-12 shrink-0">
          <svg className="h-[51px] w-[54px]" viewBox="0 0 54 51" fill="none" aria-hidden>
            <path
              d="M5 13L13 5V38A7.500 7.500 0 0 0 28 38V13A7.500 7.500 0 0 1 43 13V46L51 38"
              stroke="#303848"
              strokeWidth="6"
              strokeLinecap="round"
              strokeLinejoin="round"
            />
          </svg>
        </button>
      </div>
      <button type="button" className="mt-[62px] flex w-48 shrink-0 flex-col items-center gap-2.5 text-[#9899a8]">
        <svg className="h-[54px] w-[56px]" viewBox="0 0 56 54" fill="none" aria-hidden>
          <path
            d="M25 51H7Q2 51 2 46V8Q2 3 7 3H18Q21 3 23 5L27 9Q29 11 32 11H45Q51 11 51 17V24"
            stroke="currentColor"
            strokeWidth="4"
            strokeLinecap="round"
          />
          <path
            d="M39 25Q40.500 22 42 25L44.500 31 51 32Q55 33 52.500 35.500L48.500 40 49.500 47Q49.500 51 46 49.500L40.500 46.500 35 49.500Q31.500 51 31.500 47L32.500 40 28.500 35.500Q26 33 30 32L36.500 31Z"
            stroke="currentColor"
            strokeWidth="4"
            strokeLinejoin="round"
          />
        </svg>
        <span className="text-[32px] leading-10">收藏夹</span>
      </button>
    </header>
  );
}

export default function App() {
  const [saved, setSaved] = useState(false);

  return (
    <div lang="zh-CN" className="flex min-h-screen flex-col bg-white font-['Roboto','Noto_Sans_CJK_SC',sans-serif]">
      <StatusBar />
      <RouteHeader />

      <main className="relative min-h-[900px] flex-1 overflow-hidden">
        <MapCanvas />
        <div className="absolute inset-x-0 top-0 h-8 bg-linear-to-b from-black/4 to-transparent" />

        <Pin kind="bolt" className="top-[588px] left-[137px]" />
        <Pin kind="fast" className="top-[646px] left-[381px]" />
        <Pin kind="fast" className="top-[642px] left-[654px]" />
        <Pin kind="start" className="top-[555px] left-[949px]" />

        <RangePill className="top-[485px] left-[811px]">起始电量：不低于344公里</RangePill>
        <RangePill className="top-[696px] left-0">终点续航：预计剩余74公里</RangePill>

        {/* western stations stack above eastern ones */}
        <StationCard className="top-[629px] left-[741px]" name="【非合作站,谨慎前..." time="1小时3分钟" />
        <StationCard className="top-[634px] left-[468px]" name="玉林市兴业县政府充..." time="1小时3分钟" />
        <StationCard className="top-[593px] left-[223px]" name="【非合作站,谨慎前..." />

        <div className="absolute inset-x-15 bottom-15 flex items-center justify-between">
          <button
            type="button"
            aria-label="定位"
            className="flex size-[108px] items-center justify-center rounded-full bg-white text-[#303848] shadow-[0_-4px_18px_rgba(0,0,0,0.12)]"
          >
            <svg className="size-[66px]" viewBox="0 0 66 66" fill="none" stroke="currentColor" aria-hidden>
              <circle cx="33" cy="33" r="24" strokeWidth="6" />
              <circle cx="33" cy="33" r="9" fill="currentColor" stroke="none" />
              <path d="M33 3V9M33 57V63M3 33H9M57 33H63" strokeWidth="6" strokeLinecap="round" />
            </svg>
          </button>
          <button
            type="button"
            className="flex h-[108px] w-[300px] items-center justify-center gap-4 rounded-full bg-white pl-0.5 text-[39px] text-[#303648]"
          >
            <svg className="h-[54px] w-[58px]" viewBox="0 0 58 54" fill="none" stroke="currentColor" aria-hidden>
              <path d="M9 4V8M9 24V50M29 4V30M29 46V50M49 4V8M49 24V50" strokeWidth="6" strokeLinecap="round" />
              <circle cx="9" cy="17" r="6" strokeWidth="6" />
              <circle cx="29" cy="38" r="6" strokeWidth="6" />
              <circle cx="49" cy="17" r="6" strokeWidth="6" />
            </svg>
            策略调整
          </button>
        </div>
      </main>

      <section className="px-15 pt-15 text-[#171a26]">
        <button
          type="button"
          className="flex h-48 w-[315px] flex-col items-center justify-center rounded-2xl bg-[#5aaae4] pt-4 whitespace-nowrap text-white"
        >
          <span className="text-4xl leading-[60px]">推荐模式</span>
          <span className="text-5xl leading-[72px]">13小时42分钟</span>
        </button>

        <ul className="mt-[47px] grid grid-cols-2 gap-x-15 text-4xl leading-[60px]">
          {STATS.map((s) => (
            <li key={s.label} className="flex items-center gap-4 whitespace-nowrap">
              <span className="size-[9px] rounded-full bg-[#9c9cac]" />
              {s.label}：{s.value}
            </li>
          ))}
        </ul>

        <div className="mt-[43px] flex items-center justify-between border-t-2 border-[#e8e8e8] pt-[34px]">
          <button type="button" className="flex items-center gap-3 pl-1.5 text-[42px] font-medium text-[#2d3548]">
            <svg className="h-[42px] w-12" viewBox="0 0 48 42" aria-hidden>
              <g fill="currentColor">
                <circle cx="5" cy="5" r="4" />
                <circle cx="5" cy="20" r="4" />
                <circle cx="5" cy="35" r="4" />
              </g>
              <path d="M18 5H45M18 20H45M18 35H45" stroke="currentColor" strokeWidth="4" strokeLinecap="round" />
            </svg>
            路线详情
          </button>
          <button
            type="button"
            aria-pressed={saved}
            onClick={() => setSaved(!saved)}
            className="flex h-[108px] w-60 items-center justify-center gap-2.5 rounded-full border-2 border-[#a3a3b0] text-4xl text-[#9899a8]"
          >
            <StarIcon className="size-[50px]" />
            收藏
          </button>
        </div>
      </section>

      <div className="mt-[99px] mb-6 h-[15px] w-[402px] self-center rounded-full bg-black" />
    </div>
  );
}
